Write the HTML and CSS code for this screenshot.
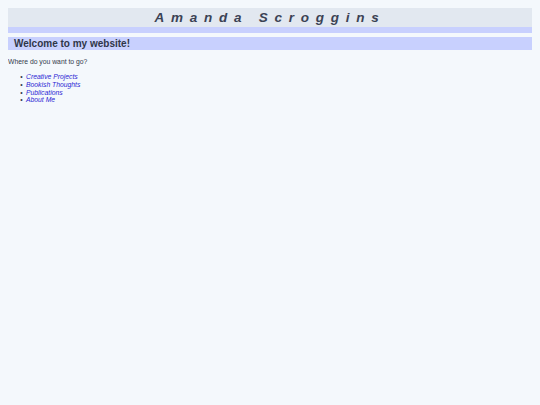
FILE: index.html
```html
<!DOCTYPE html>
<html lang="en">
<head>
<meta charset="utf-8">
<title>Amanda Scroggins</title>
<link rel="stylesheet" href="styles.css">
</head>
<body>
<header class="site-header">
  <h1 class="site-title">Amanda Scroggins</h1>
</header>
<main class="content">
  <h2 class="page-heading">Welcome to my website!</h2>
  <p class="intro">Where do you want to go?</p>
  <ul class="nav-list">
    <li><a href="#">Creative Projects</a></li>
    <li><a href="#">Bookish Thoughts</a></li>
    <li><a href="#">Publications</a></li>
    <li><a href="#">About Me</a></li>
  </ul>
</main>
</body>
</html>
```
FILE: styles.css
```css
html {
  background: #f4f8fc;
}
body {
  margin: 8px;
  font-family: "Liberation Sans", Arial, sans-serif;
  font-size: 6.8px;
  line-height: 7.7px;
  color: #333a4c;
  background: #f4f8fc;
}
.site-header {
  background: #e2e8f0;
  border-bottom: 6px solid #c8d0fe;
}
.site-title {
  margin: 0;
  padding: 2px 0 1.5px;
  font-size: 13.5px;
  line-height: normal;
  font-weight: bold;
  font-style: italic;
  letter-spacing: 0.5em;
  text-align: center;
  color: #3b4254;
}
.content {
  display: block;
}
.page-heading {
  margin: 4px 0 0;
  padding: 1px 6px;
  font-size: 10px;
  line-height: normal;
  font-weight: bold;
  background: #c8d0fe;
  color: #2f3648;
}
.intro {
  margin: 8px 0 7px;
}
.nav-list {
  margin: 8px 0;
  padding-left: 18px;
}
.nav-list li::marker {
  content: "\2022\2002";
  color: #333a4c;
}
.nav-list a {
  color: #2b1fd4;
  font-style: italic;
  text-decoration: none;
}
```
